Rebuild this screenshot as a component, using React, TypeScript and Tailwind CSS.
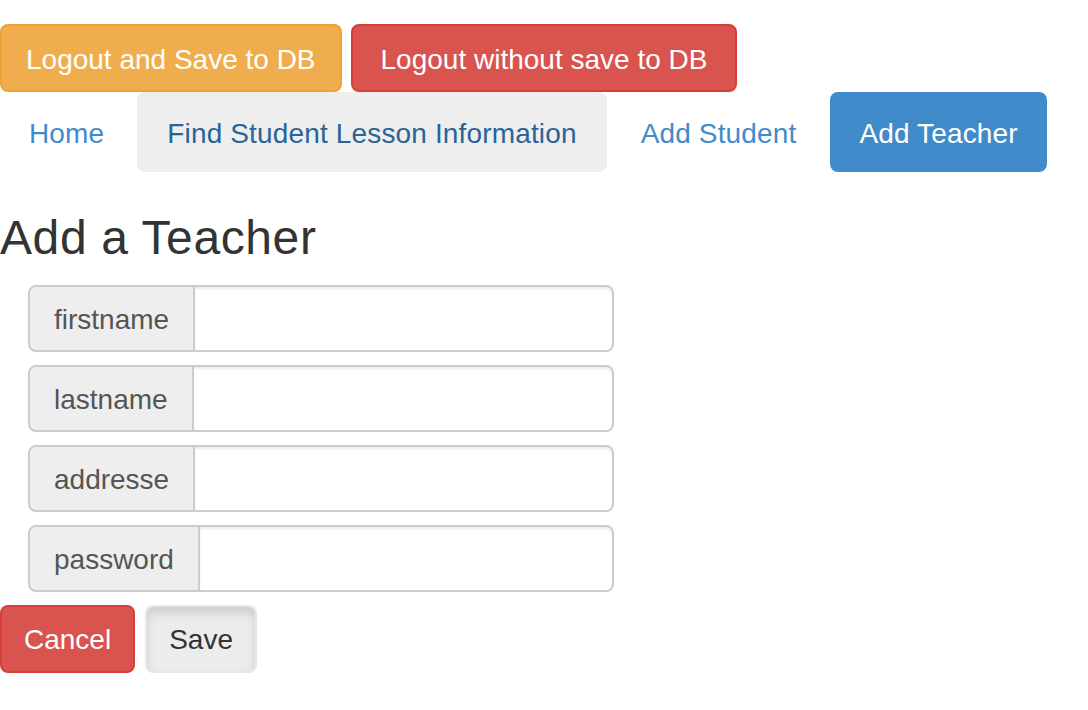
const fields = ["firstname", "lastname", "addresse", "password"];

const navItems = [
  { name: "Home", state: "idle" },
  { name: "Find Student Lesson Information", state: "hover" },
  { name: "Add Student", state: "idle" },
  { name: "Add Teacher", state: "active" },
];

export default function App() {
  return (
    <div className="min-h-screen bg-white pt-[24px] font-['Liberation_Sans',Arial,sans-serif] text-[28px] text-[#333]">
      <div className="flex gap-[9px]">
        <button className="rounded-[8px] border-2 border-[#eea236] bg-[#f0ad4e] px-[24px] pt-[14px] pb-[10px] leading-[40px] text-white">
          Logout and Save to DB
        </button>
        <button className="rounded-[8px] border-2 border-[#d43f3a] bg-[#d9534f] px-[28px] pt-[14px] pb-[10px] leading-[40px] text-white">
          Logout without save to DB
        </button>
      </div>

      <ul className="flex gap-[4px] tracking-[0.15px]">
        {navItems.map((item) => (
          <li key={item.name}>
            <a
              href="#"
              className={
                item.state === "active"
                  ? "block rounded-[8px] bg-[#428bca] px-[29px] pt-[22px] pb-[18px] leading-[40px] text-white"
                  : item.state === "hover"
                    ? "block rounded-[8px] bg-[#eee] px-[30px] pt-[22px] pb-[18px] leading-[40px] text-[#2a6496]"
                    : item.name === "Home"
                      ? "block rounded-[8px] px-[29px] pt-[22px] pb-[18px] leading-[40px] text-[#428bca]"
                      : "block rounded-[8px] px-[30px] pt-[22px] pb-[18px] leading-[40px] text-[#428bca]"
              }
            >
              {item.name}
            </a>
          </li>
        ))}
      </ul>

      <h3 className="mt-[40px] mb-[20px] text-[48px] leading-[1.1] font-medium tracking-[0.6px] text-[#333]">
        Add a Teacher
      </h3>

      <form className="flex flex-col">
        <div className="ml-[28px] flex w-[586px] flex-col gap-[13px]">
          {fields.map((f) => (
            <div key={f} className="flex h-[67px]">
              <span className="flex items-center rounded-l-[8px] border-2 border-[#ccc] bg-[#eee] px-[24px] pt-[3px] text-[#555]">
                {f}
              </span>
              <input
                type={f === "password" ? "password" : "text"}
                className="flex-1 rounded-r-[8px] border-2 border-l-0 border-[#ccc] px-[24px] shadow-[inset_0_2px_2px_rgba(0,0,0,0.075)] outline-none"
              />
            </div>
          ))}
        </div>
        <div className="mt-[13px] flex gap-[10px]">
          <button
            type="button"
            className="rounded-[8px] border-2 border-[#d43f3a] bg-[#d9534f] px-[22px] pt-[13px] pb-[11px] leading-[40px] text-white"
          >
            Cancel
          </button>
          <button
            type="button"
            className="rounded-[8px] border-2 border-[#e8e8e8] bg-[#ececec] px-[22px] pt-[13px] pb-[11px] leading-[40px] text-[#333] shadow-[inset_0_6px_10px_rgba(0,0,0,0.125)]"
          >
            Save
          </button>
        </div>
      </form>
    </div>
  );
}
